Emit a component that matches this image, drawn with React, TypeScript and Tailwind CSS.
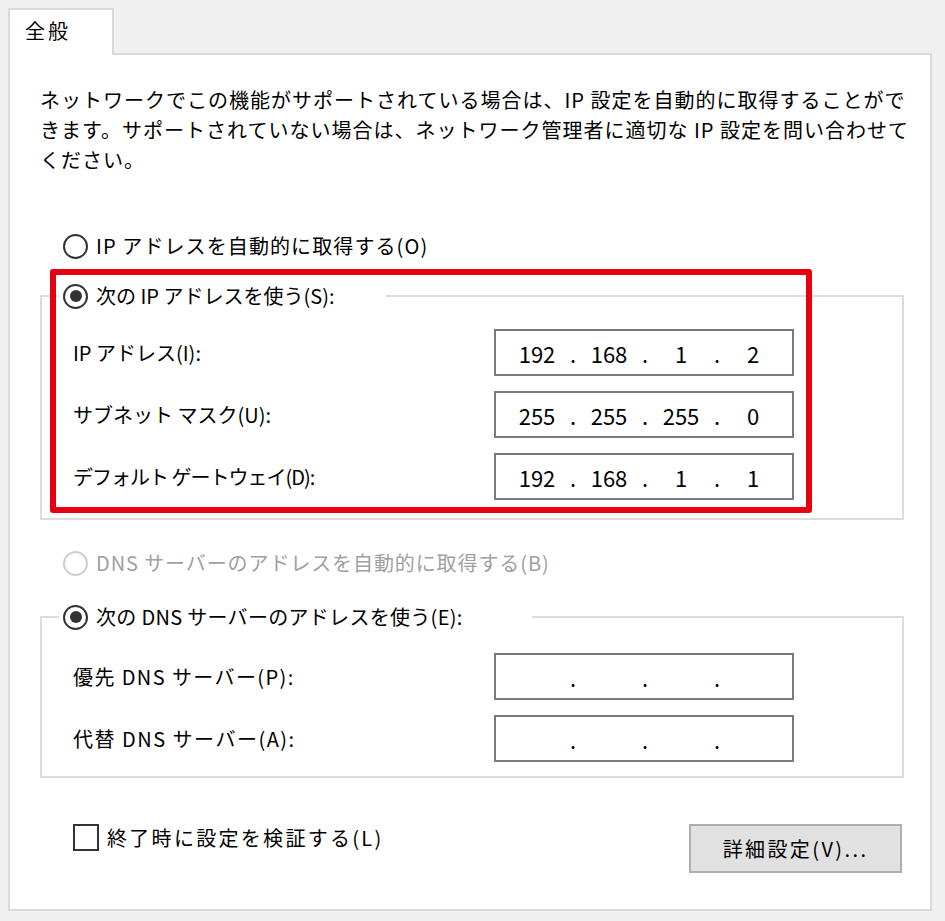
import { Fragment } from 'react'

const font = "font-['Noto_Sans_CJK_JP','Noto_Sans',sans-serif]"

function Radio({ checked = false, disabled = false }: { checked?: boolean; disabled?: boolean }) {
  return (
    <span
      className={
        disabled
          ? 'flex h-[25px] w-[25px] shrink-0 items-center justify-center rounded-full border-2 border-[#cfcfcf] bg-white'
          : 'flex h-[25px] w-[25px] shrink-0 items-center justify-center rounded-full border-2 border-[#333333] bg-white'
      }
    >
      {checked && <span className="h-[12px] w-[12px] rounded-full bg-[#333333]" />}
    </span>
  )
}

function IpField({ octets }: { octets: string[] }) {
  return (
    <div className="flex h-[47px] w-[300px] shrink-0 items-center border-2 border-[#7a7a7a] bg-white pl-[8px] text-[22px] leading-[30px]">
      {octets.map((o, i) => (
        <Fragment key={i}>
          {i > 0 && <span className="w-[6px] text-center">.</span>}
          <span className="w-[66px] text-center">{o}</span>
        </Fragment>
      ))}
    </div>
  )
}

function FieldRow({ label, octets, track = '' }: { label: string; octets: string[]; track?: string }) {
  return (
    <div className="flex items-center pl-[31px]">
      <span className={`w-[421px] whitespace-nowrap ${track}`}>{label}</span>
      <IpField octets={octets} />
    </div>
  )
}

export default function App() {
  return (
    <div className={`h-[921px] w-[945px] bg-[#f0f0f0] pl-2 pt-2 text-[20px] leading-[30px] text-black ${font}`}>
      <div className="relative z-10 h-[47px] w-[106px] border-2 border-b-0 border-[#d9d9d9] bg-white pl-[15px] pt-[6px] tracking-[3px]">
        全般
      </div>

      <div className="relative -mt-[2px] h-[858px] w-[924px] border-2 border-[#d9d9d9] bg-white pl-[30px] pr-[26px] pt-[30px]">
        <p className="whitespace-nowrap tracking-[1px]">
          ネットワークでこの機能がサポートされている場合は、IP 設定を自動的に取得することがで
          <br />
          きます。サポートされていない場合は、ネットワーク管理者に適切な IP 設定を問い合わせて
          <br />
          ください。
        </p>

        <label className="mt-[56px] flex h-[30px] items-center gap-[8px] pl-[23px]">
          <Radio />
          <span className="whitespace-nowrap tracking-[1.1px]">IP アドレスを自動的に取得する(O)</span>
        </label>

        <fieldset className="mt-[20px] min-w-0 border-2 border-[#dcdcdc] pb-[18px]">
          <legend className="ml-[17px] flex h-[30px] w-[327px] items-center gap-[8px] pl-[4px]">
            <Radio checked />
            <span className="whitespace-nowrap">次の IP アドレスを使う(S):</span>
          </legend>
          <div className="mt-[18px] flex flex-col gap-[15px]">
            <FieldRow label="IP アドレス(I):" octets={['192', '168', '1', '2']} />
            <FieldRow label="サブネット マスク(U):" octets={['255', '255', '255', '0']} />
            <FieldRow
              label="デフォルト ゲートウェイ(D):"
              octets={['192', '168', '1', '1']}
              track="tracking-[-1px]"
            />
          </div>
        </fieldset>

        <label className="mt-[28px] flex h-[30px] items-center gap-[8px] pl-[23px] text-[#a0a0a0]">
          <Radio disabled />
          <span className="whitespace-nowrap tracking-[0.9px]">DNS サーバーのアドレスを自動的に取得する(B)</span>
        </label>

        <fieldset className="mt-[24px] min-w-0 border-2 border-[#dcdcdc] pb-[14px]">
          <legend className="ml-[17px] flex h-[30px] w-[473px] items-center gap-[8px] pl-[4px]">
            <Radio checked />
            <span className="whitespace-nowrap tracking-[0.3px]">次の DNS サーバーのアドレスを使う(E):</span>
          </legend>
          <div className="mt-[21px] flex flex-col gap-[15px]">
            <FieldRow label="優先 DNS サーバー(P):" octets={['', '', '', '']} track="tracking-[1.4px]" />
            <FieldRow label="代替 DNS サーバー(A):" octets={['', '', '', '']} track="tracking-[1.5px]" />
          </div>
        </fieldset>

        <div className="mt-[46px] flex items-start justify-between pr-[2px]">
          <label className="flex h-[27px] items-center gap-[8px] pl-[33px]">
            <span className="h-[27px] w-[26px] shrink-0 border-2 border-[#333333] bg-white" />
            <span className="whitespace-nowrap tracking-[2.3px]">終了時に設定を検証する(L)</span>
          </label>
          <button className="h-[49px] w-[213px] border-2 border-[#adadad] bg-[#e1e1e1] text-[20px] tracking-[2.4px]">
            詳細設定(V)...
          </button>
        </div>

        <div className="pointer-events-none absolute left-[40px] top-[214px] h-[244px] w-[762px] rounded-[3px] border-[6px] border-[#e60012]" />
      </div>
    </div>
  )
}
